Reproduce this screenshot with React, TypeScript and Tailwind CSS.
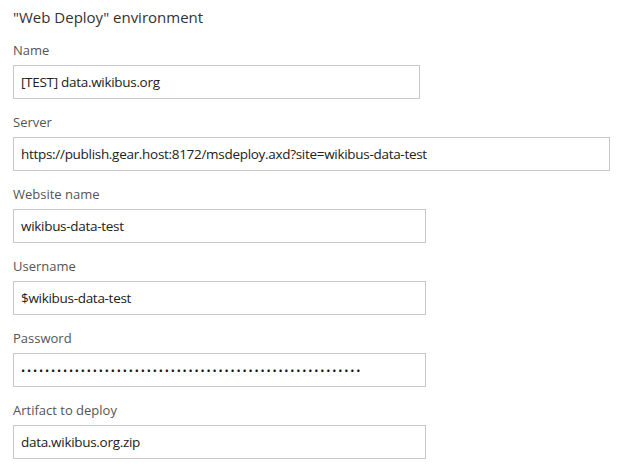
import React from "react";

const font = { fontFamily: '"Open Sans", "Noto Sans", sans-serif' };

function Field({ label, value, width, password }: { label: string; value: string; width: string; password?: boolean }) {
  return (
    <div className="flex flex-col mb-[13px]">
      <div className="h-[20px] leading-[20px] text-[13px] text-[#555] mb-[5px]">{label}</div>
      <div className={`h-[34px] border border-[#c8c8c8] bg-white flex items-center px-[7px] ${width}`}>
        {password ? (
          <span className="text-[11px] tracking-[1.85px] text-[#111] leading-none">{value}</span>
        ) : (
          <span className="text-[13.5px] tracking-[-0.3px] text-[#222] whitespace-nowrap">{value}</span>
        )}
      </div>
    </div>
  );
}

export default function App() {
  const dots = "•".repeat(57);
  return (
    <div className="w-[626px] h-[466px] bg-white overflow-hidden px-[13px] pt-[6px]" style={font}>
      <div className="h-[22px] leading-[22px] text-[15px] text-[#333] mb-[12px]">"Web Deploy" environment</div>
      <Field label="Name" value="[TEST] data.wikibus.org" width="w-[407px]" />
      <Field label="Server" value="https://publish.gear.host:8172/msdeploy.axd?site=wikibus-data-test" width="w-[597px]" />
      <Field label="Website name" value="wikibus-data-test" width="w-[413px]" />
      <Field label="Username" value="$wikibus-data-test" width="w-[413px]" />
      <Field label="Password" value={dots} width="w-[413px]" password />
      <Field label="Artifact to deploy" value="data.wikibus.org.zip" width="w-[413px]" />
    </div>
  );
}
